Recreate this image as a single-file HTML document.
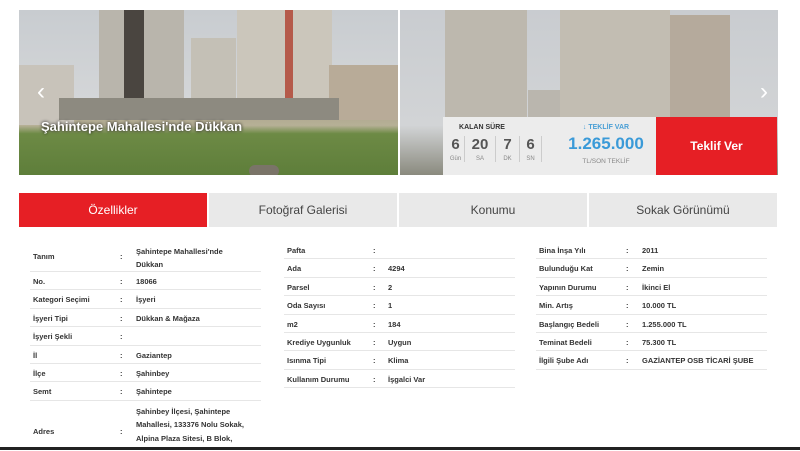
<!DOCTYPE html>
<html><head><meta charset="utf-8"><style>
*{margin:0;padding:0;box-sizing:border-box}
body{width:800px;height:450px;overflow:hidden;background:#fff;font-family:"Liberation Sans","DejaVu Sans",sans-serif;position:relative}
.ph{position:absolute;top:10px;height:165px;overflow:hidden}
.b{position:absolute;background:#c9c5bd}
.tab{position:absolute;top:193px;height:34px;width:188px;background:#e9e9e9;color:#444;font-size:12px;text-align:center;line-height:34px}
.tbl{position:absolute;font-size:7.5px;font-weight:bold;color:#333}
.r{position:relative;border-bottom:1px solid #e6e6e6;height:18.4px}
.r span{position:absolute;top:5px}
</style></head><body>
<!-- left photo -->
<div class="ph" style="left:19px;width:379px;background:linear-gradient(#c8ccd0 0,#d4d6d8 55%,#a9a28a 58%,#b6b096 70%,#6d8a45 75%,#5e7e3a 100%)">
<div class="b" style="left:80px;top:0;width:85px;height:95px;background:#b9b5ac"></div>
<div class="b" style="left:105px;top:0;width:20px;height:95px;background:#4a4540"></div>
<div class="b" style="left:172px;top:28px;width:45px;height:68px;background:#c4c0b6"></div>
<div class="b" style="left:218px;top:0;width:95px;height:100px;background:#cbc6bb"></div>
<div class="b" style="left:266px;top:0;width:8px;height:90px;background:#b55a4a"></div>
<div class="b" style="left:0;top:55px;width:55px;height:60px;background:#c8c3ba"></div>
<div class="b" style="left:310px;top:55px;width:69px;height:55px;background:#b8ab98"></div>
<div class="b" style="left:40px;top:88px;width:280px;height:22px;background:#8d8a80"></div>
<div style="position:absolute;left:18px;top:68px;color:#fff;font-size:24px">‹</div>
<div style="position:absolute;left:22px;top:109px;color:#fff;font-size:13px;font-weight:bold;text-shadow:0 0 3px #000">Şahintepe Mahallesi'nde Dükkan</div>
<div class="b" style="left:230px;top:155px;width:30px;height:12px;background:#7a7468;border-radius:8px"></div>
</div>
<!-- right photo -->
<div class="ph" style="left:400px;width:378px;background:linear-gradient(#c9ccd0 0,#d2d4d6 70%,#8a8a7e 100%)">
<div class="b" style="left:45px;top:0;width:82px;height:110px;background:#bdb8ae"></div>
<div class="b" style="left:160px;top:0;width:110px;height:110px;background:#c2bdb2"></div>
<div class="b" style="left:270px;top:5px;width:60px;height:105px;background:#b5aa9c"></div>
<div class="b" style="left:128px;top:80px;width:32px;height:30px;background:#bab6ae"></div>
<div style="position:absolute;right:10px;top:68px;color:#fff;font-size:24px">›</div>
</div>
<!-- overlay -->
<div style="position:absolute;left:443px;top:117px;width:213px;height:58px;background:#ececec"></div>
<div style="position:absolute;left:443px;top:124px;width:78px;text-align:center;font-size:7px;font-weight:bold;color:#333">KALAN SÜRE</div>
<div style="position:absolute;left:447px;top:136px;font-size:15px;font-weight:bold;color:#555;display:flex">
<div style="width:18px;text-align:center;border-right:1px solid #ccc">6<div style="font-size:6px;font-weight:normal;color:#888;margin-top:3px">Gün</div></div>
<div style="width:31px;text-align:center;border-right:1px solid #ccc">20<div style="font-size:6px;font-weight:normal;color:#888;margin-top:3px">SA</div></div>
<div style="width:24px;text-align:center;border-right:1px solid #ccc">7<div style="font-size:6px;font-weight:normal;color:#888;margin-top:3px">DK</div></div>
<div style="width:22px;text-align:center;border-right:1px solid #ccc">6<div style="font-size:6px;font-weight:normal;color:#888;margin-top:3px">SN</div></div>
</div>
<div style="position:absolute;left:558px;top:124px;width:96px;text-align:center;font-size:7px;font-weight:bold;color:#4a9fd5">↓ TEKLİF VAR</div>
<div style="position:absolute;left:558px;top:134px;width:96px;text-align:center;font-size:17px;font-weight:bold;color:#3a9ad8">1.265.000</div>
<div style="position:absolute;left:558px;top:158px;width:96px;text-align:center;font-size:6.5px;color:#888">TL/SON TEKLİF</div>
<div style="position:absolute;left:656px;top:117px;width:121px;height:58px;background:#e61f25;color:#fff;font-size:12px;font-weight:bold;text-align:center;line-height:58px">Teklif Ver</div>
<!-- tabs -->
<div class="tab" style="left:19px;background:#e61f25;color:#fff">Özellikler</div>
<div class="tab" style="left:209px">Fotoğraf Galerisi</div>
<div class="tab" style="left:399px">Konumu</div>
<div class="tab" style="left:589px">Sokak Görünümü</div>
<!-- table 1 -->
<div class="tbl" style="left:30px;top:242px;width:231px">
<div class="r" style="height:30px"><span style="left:3px;top:10px">Tanım</span><span style="left:90px;top:10px">:</span><span style="left:106px;top:3px;line-height:13px">Şahintepe Mahallesi'nde<br>Dükkan</span></div>
<div class="r"><span style="left:3px">No.</span><span style="left:90px">:</span><span style="left:106px">18066</span></div>
<div class="r"><span style="left:3px">Kategori Seçimi</span><span style="left:90px">:</span><span style="left:106px">İşyeri</span></div>
<div class="r"><span style="left:3px">İşyeri Tipi</span><span style="left:90px">:</span><span style="left:106px">Dükkan &amp; Mağaza</span></div>
<div class="r"><span style="left:3px">İşyeri Şekli</span><span style="left:90px">:</span></div>
<div class="r"><span style="left:3px">İl</span><span style="left:90px">:</span><span style="left:106px">Gaziantep</span></div>
<div class="r"><span style="left:3px">İlçe</span><span style="left:90px">:</span><span style="left:106px">Şahinbey</span></div>
<div class="r"><span style="left:3px">Semt</span><span style="left:90px">:</span><span style="left:106px">Şahintepe</span></div>
<div class="r" style="border:0;height:50px"><span style="left:3px;top:26px">Adres</span><span style="left:90px;top:26px">:</span><span style="left:106px;top:4px;line-height:13.5px">Şahinbey İlçesi, Şahintepe<br>Mahallesi, 133376 Nolu Sokak,<br>Alpina Plaza Sitesi, B Blok,</span></div>
</div>
<!-- table 2 -->
<div class="tbl" style="left:284px;top:241px;width:231px">
<div class="r"><span style="left:3px">Pafta</span><span style="left:89px">:</span></div>
<div class="r"><span style="left:3px">Ada</span><span style="left:89px">:</span><span style="left:104px">4294</span></div>
<div class="r"><span style="left:3px">Parsel</span><span style="left:89px">:</span><span style="left:104px">2</span></div>
<div class="r"><span style="left:3px">Oda Sayısı</span><span style="left:89px">:</span><span style="left:104px">1</span></div>
<div class="r"><span style="left:3px">m2</span><span style="left:89px">:</span><span style="left:104px">184</span></div>
<div class="r"><span style="left:3px">Krediye Uygunluk</span><span style="left:89px">:</span><span style="left:104px">Uygun</span></div>
<div class="r"><span style="left:3px">Isınma Tipi</span><span style="left:89px">:</span><span style="left:104px">Klima</span></div>
<div class="r"><span style="left:3px">Kullanım Durumu</span><span style="left:89px">:</span><span style="left:104px">İşgalci Var</span></div>
</div>
<!-- table 3 -->
<div class="tbl" style="left:536px;top:241px;width:231px">
<div class="r"><span style="left:3px">Bina İnşa Yılı</span><span style="left:90px">:</span><span style="left:106px">2011</span></div>
<div class="r"><span style="left:3px">Bulunduğu Kat</span><span style="left:90px">:</span><span style="left:106px">Zemin</span></div>
<div class="r"><span style="left:3px">Yapının Durumu</span><span style="left:90px">:</span><span style="left:106px">İkinci El</span></div>
<div class="r"><span style="left:3px">Min. Artış</span><span style="left:90px">:</span><span style="left:106px">10.000 TL</span></div>
<div class="r"><span style="left:3px">Başlangıç Bedeli</span><span style="left:90px">:</span><span style="left:106px">1.255.000 TL</span></div>
<div class="r"><span style="left:3px">Teminat Bedeli</span><span style="left:90px">:</span><span style="left:106px">75.300 TL</span></div>
<div class="r"><span style="left:3px">İlgili Şube Adı</span><span style="left:90px">:</span><span style="left:106px">GAZİANTEP OSB TİCARİ ŞUBE</span></div>
</div>
<div style="position:absolute;left:0;top:447px;width:800px;height:3px;background:#222"></div>
</body></html>
